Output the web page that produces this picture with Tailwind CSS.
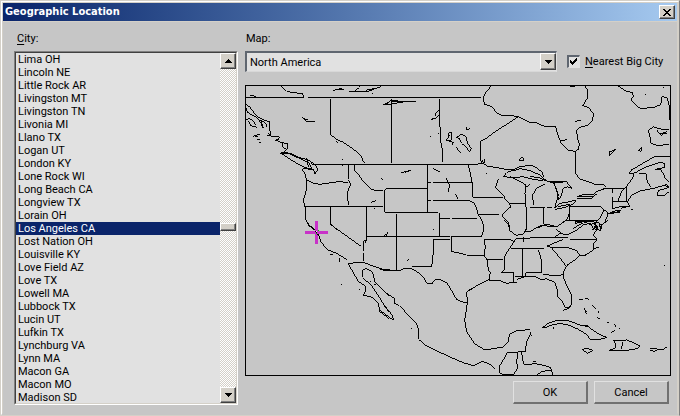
<!DOCTYPE html>
<html lang="en">
<head>
<meta charset="utf-8">
<title>Geographic Location</title>
<script src="https://cdn.jsdelivr.net/npm/@tailwindcss/browser@4"></script>
</head>
<body class="flex min-h-screen bg-[#c6c6c6] text-black text-[11px] leading-[13px] font-[Roboto,'Liberation_Sans',sans-serif]">
<main class="flex grow flex-col border border-t-[#d4d0c8] border-l-[#d4d0c8] border-r-[#808080] border-b-[#d4d0c8]">
 <div class="flex grow flex-col border border-t-white border-l-white border-r-[#d4d0c8] border-b-[#c6c6c6]">
  <div class="flex grow flex-col border border-[#d4d0c8] border-b-[#c6c6c6]">
  <header class="flex h-[18px] items-center justify-between bg-linear-to-r from-[#0a246a] to-[#a6caf0] pr-[2px] pl-[2px]">
    <h1 class="text-[11px] leading-[18px] font-bold text-white font-['DejaVu_Sans_Condensed',sans-serif]">Geographic Location</h1>
    <button type="button" aria-label="Close" class="flex h-[14px] w-[16px] items-center justify-center border border-t-white border-l-white border-r-[#404040] border-b-[#404040] bg-[#d4d0c8] shadow-[inset_-1px_-1px_#808080]">
      <svg class="h-[7px] w-[8px]" viewBox="0 0 8 7" shape-rendering="crispEdges" aria-hidden="true"><path d="M0 0h2v1h1v1h2v-1h1v-1h2v1h-1v1h-1v1h-1v1h1v1h1v1h1v1h-2v-1h-1v-1h-2v1h-1v1h-2v-1h1v-1h1v-1h1v-1h-1v-1h-1v-1h-1z"/></svg>
    </button>
  </header>
  <div class="flex grow border-t border-[#d4d0c8] pt-[10px] pr-[6px] pb-[8px] pl-[11px]">
    <section class="mr-[7px] flex w-[224px] shrink-0 flex-col">
      <label for="city" class="mb-[6px] pl-[3px]"><span class="underline underline-offset-2">C</span>ity:</label>
      <div class="flex grow border border-t-[#808080] border-l-[#808080] border-r-white border-b-white">
       <div class="flex grow border border-t-[#404040] border-l-[#404040] border-r-[#d4d0c8] border-b-[#d4d0c8] bg-[#e1e1e1]">
        <div class="relative grow">
        <select id="city" size="27" class="absolute inset-0 h-full w-full appearance-none overflow-hidden border-0 bg-transparent p-0 outline-none [&>option]:h-[13px] [&>option]:min-h-0 [&>option]:px-[2px] [&>option]:py-0 [&>option]:leading-[13px] [&>option:checked]:bg-[linear-gradient(#0a246a,#0a246a)] [&>option:checked]:text-white">
          <option>Lima OH</option><option>Lincoln NE</option><option>Little Rock AR</option><option>Livingston MT</option><option>Livingston TN</option><option>Livonia MI</option><option>Llano TX</option><option>Logan UT</option><option>London KY</option><option>Lone Rock WI</option><option>Long Beach CA</option><option>Longview TX</option><option>Lorain OH</option><option selected>Los Angeles CA</option><option>Lost Nation OH</option><option>Louisville KY</option><option>Love Field AZ</option><option>Love TX</option><option>Lowell MA</option><option>Lubbock TX</option><option>Lucin UT</option><option>Lufkin TX</option><option>Lynchburg VA</option><option>Lynn MA</option><option>Macon GA</option><option>Macon MO</option><option>Madison SD</option>
        </select>
        </div>
        <div class="flex w-[16px] flex-col bg-[repeating-conic-gradient(#ffffff_0_25%,#d4d0c8_0_50%)] bg-size-[2px_2px]">
          <button type="button" aria-label="Scroll up" class="flex h-[16px] items-center justify-center border border-t-white border-l-white border-r-[#404040] border-b-[#404040] bg-[#d4d0c8] shadow-[inset_-1px_-1px_#808080]"><svg class="h-[4px] w-[7px]" viewBox="0 0 7 4" shape-rendering="crispEdges" aria-hidden="true"><path d="M3 0h1v1h1v1h1v1h1v1H0V3h1V2h1V1h1z"/></svg></button>
          <div class="grow-155 basis-0"></div>
          <div class="h-[8px] border border-t-white border-l-white border-r-[#404040] border-b-[#404040] bg-[#d4d0c8] shadow-[inset_-1px_-1px_#808080]"></div>
          <div class="grow-157 basis-0"></div>
          <button type="button" aria-label="Scroll down" class="flex h-[16px] items-center justify-center border border-t-white border-l-white border-r-[#404040] border-b-[#404040] bg-[#d4d0c8] shadow-[inset_-1px_-1px_#808080]"><svg class="h-[4px] w-[7px]" viewBox="0 0 7 4" shape-rendering="crispEdges" aria-hidden="true"><path d="M0 0h7v1h-1v1h-1v1h-1v1h-1v-1h-1v-1h-1v-1h-1z"/></svg></button>
        </div>
       </div>
      </div>
    </section>
    <section class="flex grow flex-col">
      <label for="map" class="mb-[6px] pl-[1px]">Map:</label>
      <div class="mb-[13px] flex items-center gap-[10px]">
        <div class="relative h-[21px] grow border-t-2 border-r border-b border-l-2 border-t-[#5f6670] border-l-[#5f6670] border-r-[#e1e1e1] border-b-[#d8d8d8] bg-[#e1e1e1]">
          <select id="map" class="block h-full w-full appearance-none bg-transparent pl-[3px] outline-none"><option>North America</option></select>
          <span class="pointer-events-none absolute top-0 right-0 flex h-[17px] w-[16px] items-center justify-center border border-t-white border-l-white border-r-[#404040] border-b-[#404040] bg-[#d4d0c8] shadow-[inset_-1px_-1px_#808080]"><svg class="h-[4px] w-[7px]" viewBox="0 0 7 4" shape-rendering="crispEdges" aria-hidden="true"><path d="M0 0h7v1h-1v1h-1v1h-1v1h-1v-1h-1v-1h-1v-1h-1z"/></svg></span>
        </div>
        <label class="flex w-[104px] items-center gap-[5px] whitespace-nowrap">
          <span class="relative flex h-[13px] w-[13px] shrink-0">
          <input type="checkbox" checked class="h-[13px] w-[13px] appearance-none border-t-2 border-r border-b border-l-2 border-t-[#5f6670] border-l-[#5f6670] border-r-[#e1e1e1] border-b-[#e1e1e1] bg-[#e1e1e1]">
          <svg class="pointer-events-none absolute top-[3px] left-[3px] h-[7px] w-[7px]" viewBox="0 0 7 7" shape-rendering="crispEdges" aria-hidden="true"><path d="M0 2h1v1h1v1h1v-1h1v-1h1v-1h1v-1h1v3h-1v1h-1v1h-1v1h-1v1h-1v-1h-1v-1h-1z"/></svg>
          </span>
          <span><span class="underline underline-offset-2">N</span>earest Big City</span>
        </label>
      </div>
      <svg class="w-full grow basis-0" viewBox="245 85 426 291" preserveAspectRatio="none" shape-rendering="crispEdges" fill="none" stroke="#000" stroke-width="3" role="img" aria-label="Map of North America">
        <rect x="245.5" y="85.5" width="425" height="290" stroke-width="1"/>
        <!-- Pacific north-west -->
        <g transform="translate(240 80) scale(.333333)">
          <path d="M124 18L140 34L157 38L187 40L193 52M18 52H193M204 52H450M30 46L48 49M280 31L300 26L312 28M285 30H306M328 33L342 36L358 22L360 18M342 36L378 36L423 20M378 31l25-6M396 40h3M430 75L448 67M187 112L200 124H224M190 115L205 121M271 57V163L290 178L312 188L332 202L350 215L363 228L368 240L373 249M289 184l5 5M306 239h3M306 258h3M217 253H450"/>
          <path d="M18 72L30 82L42 98L55 112L75 122L88 124V145L92 162L82 167L105 169L121 172L108 180L124 188L142 190V205L136 214L121 220L155 222L176 232L198 238L212 244L217 253M18 84L22 96L33 104L50 112L62 128L70 145L62 120L82 134L78 142M18 120L28 115L40 124L48 136M24 122L33 137L50 142M92 167L85 160M105 182L118 178M128 188V200L138 208"/>
          <path d="M124 220L142 232L158 243L178 254L200 265L215 265L208 250L180 236L140 217ZM200 234L205 262M217 246L230 260L232 270L225 282L220 268L204 268M187 268l15-6M40 169L60 162M46 169h9M52 180L60 177M57 185L64 190"/>
          <path d="M187 268L195 282L200 300L199 330L190 362L195 379L196 415L205 435L222 450M202 300L218 309L240 313L262 310L295 305L325 307M325 255V297M325 300L332 312L322 337L325 374M193 379H430M271 381V432L292 450M379 381V450M343 255V270L355 283L366 300L380 315L395 328L407 331H429M424 295l4 3M394 367l13-5M403 384v4"/>
        </g>
        <!-- Prairies, Hudson Bay and the Midwest -->
        <g transform="translate(380 80) scale(.333333)">
          <path d="M0 52H302M34 57V250M178 57V130L182 150V185L187 210L188 247M10 75L35 61L75 65L22 74ZM35 65H108M166 108L168 98L178 88V105L168 115L153 119L166 113M151 169h3M174 160h3M205 160L214 157V180L198 182L210 165M205 182L220 187L216 196M205 160v12M229 172L245 163L258 170L263 190L274 207L268 216L260 203L245 190L237 175ZM228 202L244 220M260 142v7l10-3M0 253H294"/>
          <path d="M333 18L318 37L310 50L313 72L335 80L350 98L362 105L395 107L415 110L432 118L450 127M413 111L385 130L350 152L320 174L302 184V243M302 243L314 248L312 236M294 252L310 250L325 260L350 262L375 268L400 270L420 260L450 256M302 250l6-10M418 240l10-10l3 13zM64 278L94 271L75 277M158 265L181 277M4 296h3M318 280h3"/>
          <path d="M142 255V397M22 325H142M22 325L14 330V397H173M0 331H10M0 379H10M49 402V450M178 399V450M142 307h10M158 307H275M142 361h10M158 361H268L283 370L290 385L294 403L305 420L310 435V450M265 255L270 275L275 300L278 315V352H370M178 415H210M215 415H290M294 403H357M199 295L208 315L206 335M226 342l8 14M355 297L352 308L346 322L360 335L372 348L375 358L388 370L393 380L370 400L366 409L385 427L388 450M386 370H437"/>
          <path d="M370 290L380 278L402 270M370 290L400 293L430 290L450 296M400 272L420 266L450 272M390 290L420 304L438 315L435 340L437 370L440 400L438 450M438 322L450 312"/>
        </g>
        <!-- Quebec, New England and the Great Lakes -->
        <g transform="translate(530 80) scale(.333333)">
          <path d="M120 18L127 21L134 18M164 18L172 30V55L158 77L175 82L190 100L188 120L175 135L150 142L140 150L142 175L148 190L146 207L136 214L113 210L95 192L85 170L77 140L40 138L20 128L0 126M134 124l18-3M92 183l18-4M136 214V280L150 297L180 307L200 315L222 315L226 320M218 325H284M264 18L285 32L308 38L310 52L302 56L312 70L330 85L370 83L392 74L396 50L410 52L417 72L418 120M346 43h3M400 22h3"/>
          <path d="M418 150L385 146L370 140L355 152L360 170L362 190L385 197L418 192M380 150L388 160L395 168L400 158L412 155M388 160H410M238 228V216L256 208ZM323 212L336 202L334 214ZM420 229H377L350 243L318 262L306 268L297 282L316 278L345 262L375 252L390 247L405 250V262L375 268L392 270L400 280L405 295L418 308M297 282L312 280L308 295L290 318L275 335L264 362M328 282H348L352 305L362 320M290 318V362M248 327V340M248 350L246 385"/>
          <path d="M405 316L370 325L330 333L305 345L292 365L298 378L272 385M405 316L418 322L385 332L382 345L400 348L418 335M405 312l12 8M246 364H292M246 387L270 380H300M304 390h4M232 402L262 390L272 392L250 400H235M240 398L270 396M140 352L155 345L190 343L200 335L226 325M140 355H185L202 340M145 349H188M72 385L90 370L110 367L138 360M76 388L105 382L130 372L140 362M85 380L120 372M118 379H210L222 390L215 405L205 421H120M118 379V421M210 379L235 400L225 425L210 440"/>
          <path d="M0 256L15 260L35 275L42 292M0 272L30 285L50 303M0 290L25 292L50 303L110 306L125 325L113 320L100 325L92 352L85 358L80 330L72 310L50 303M0 296L40 303M70 307H100M45 312L20 325L8 345L10 375M0 382H45M50 382H66M72 310L85 345L78 370L74 385M40 382V430M118 400L110 420L95 430L80 440L50 432L20 445M136 422V430L160 425L185 435M130 445L160 428M186 432L200 425L208 430L212 450M190 450L198 435L206 450M196 428V445"/>
        </g>
        <!-- California and Baja -->
        <g transform="translate(240 220) scale(.333333)">
          <path d="M198 0L208 15L225 30L235 42L243 65L260 88L290 100L320 118M324 130L340 158L355 184L376 198V213L370 225L398 232L415 250L420 275L448 296M271 0V13L363 79M379 0V63H372V93M372 98V122M376 60v10M379 49H450M324 130L368 127L400 138L435 150H450M448 277L435 260L420 235L395 198L368 172V150L378 146L397 155L405 185L425 207L450 229M402 194l10-4M270 103h8M298 114v11M303 193h3M357 208h3M390 184h3"/>
        </g>
        <!-- Texas, Mexico and the Gulf -->
        <g transform="translate(380 220) scale(.333333)">
          <path d="M0 49H210M215 49H305M49 0V151M178 0V49M305 0L310 15V35L304 49M160 58H210M214 49V94L240 100L270 108H312L316 80L312 58M160 58V98L155 139H95M0 148L15 151H60L70 146H93L110 154L130 172L140 189L155 192L165 180L178 178L200 188L218 217L230 239L250 247L262 247M312 58H390L402 66L385 90L373 112V150L364 157H402V187M312 108L322 120H370M322 120L325 150L331 158L327 180M428 87V170M392 85H450M402 66L408 57H450M430 52V66M433 35H450"/>
          <path d="M371 0L388 15L390 32L408 46L430 42L440 25V0M405 170H450M412 178L440 168M438 158H450M438 158v10M262 247L260 215L280 203L300 192L325 180L360 182L380 190L403 187H410M265 212l12-6M0 202L20 220L45 237L42 250L58 257L85 285L110 312L116 330V358L135 375L175 395L215 413L250 428L280 437L308 424L330 433L344 446M0 237L18 262L38 287L40 301L15 282L0 272"/>
          <path d="M262 247L258 275L254 300L260 335L285 372L315 390L350 384L368 382L385 365L388 343L410 332L450 329M450 345L440 365L435 395L415 393L413 397H383L370 420L357 440L358 458L370 465H400L413 445L410 425L413 400M425 397L428 420L432 433L450 434M159 30h3M81 122l6-4M94 325h3M12 47l6-4M18 47L25 35"/>
        </g>
        <!-- Atlantic coast and the Caribbean -->
        <g transform="translate(530 220) scale(.333333)">
          <path d="M0 35L20 22L40 15L60 20L85 18L100 5L115 0M40 0V12M0 54H115M120 58H200M70 54L90 40L110 45L140 30L160 15L180 10M78 28L92 38M180 10L190 25L212 32L215 15L200 5L192 25M190 0L200 30M185 30L205 18M225 8L235 0M115 0H165M135 3H190M200 30L190 45L202 60L190 70V88L208 80M190 90L165 106H150L135 120L112 135L100 155L102 178L115 205L126 230V250L118 265L100 271M52 78L75 68L100 58M52 78L65 84L110 82L140 92L150 106M0 85H42M25 90L33 115L36 155M0 157H36M38 163L85 168L100 162M65 84L85 108L108 138M0 168L15 170L35 180L50 176L75 188L83 215V230L97 245L106 264L122 260"/>
          <path d="M148 239l10-2M165 235l12 3M162 265l8 17M164 275h6M186 256l12 12M203 272l3 6M201 293l8 2M232 307h6M254 312l3 8M267 325h3M244 338l10-7M37 323L55 310L80 301L115 302L150 315L175 320L195 335L212 345L230 352L205 360L180 357L172 345L145 328L115 315L90 310L65 315L50 322ZM72 320v6M155 318h18M156 389L170 385L188 391L174 400ZM248 360L255 363L290 360L310 368L331 378L320 386L292 391H238L255 385L257 370ZM278 366L274 388M360 386H382V391L370 394L360 390M385 390L400 388L410 381M402 136h3M0 337l4 12M8 424h10M0 434L10 430L35 435L62 442L68 465M20 465L35 455L62 450"/>
        </g>
        <!-- Marker of the selected city -->
        <path stroke="#c832c8" d="M316.5 221v23M305 232.500h23"/>
        <path stroke="none" fill="#00c000" d="M316 233h1v1h-1zM318 230h1v1h-1z"/>
        <path stroke="none" fill="#fff" d="M316 231h1v1h-1z"/>
        <path stroke="none" fill="#000" d="M315 231h1v1h-1zM316 232h1v1h-1zM317 234h1v1h-1z"/>
      </svg>
      <div class="mt-[5px] mr-[2px] mb-px flex justify-end gap-[6px]">
        <button type="button" class="h-[23px] w-[75px] border-t border-r-2 border-b-2 border-l border-t-[#e1e1e1] border-l-[#e1e1e1] border-r-[#707070] border-b-[#707070]">OK</button>
        <button type="button" class="h-[23px] w-[75px] border-t border-r-2 border-b-2 border-l border-t-[#e1e1e1] border-l-[#e1e1e1] border-r-[#707070] border-b-[#707070]">Cancel</button>
      </div>
    </section>
  </div>
  </div>
 </div>
</main>
</body>
</html>
